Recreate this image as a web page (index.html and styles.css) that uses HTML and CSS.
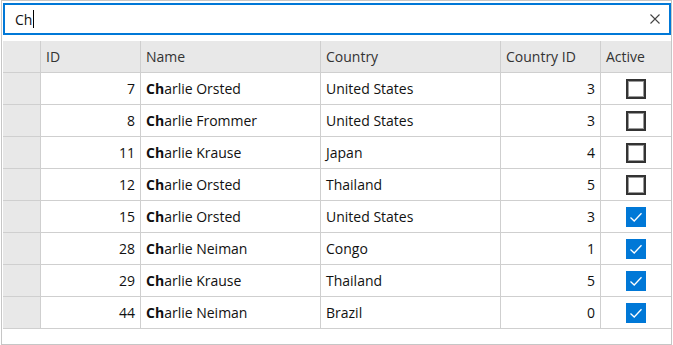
FILE: index.html
```html
<!DOCTYPE html>
<html>
<head>
<meta charset="utf-8">
<link rel="stylesheet" href="styles.css">
</head>
<body>
<div class="frame">
  <div class="search">
    <div class="search-text"><span>Ch</span><span class="caret"></span></div>
    <svg class="clear" width="12" height="12" viewBox="0 0 12 12"><path d="M1.5 1.5 L10.5 10.5 M10.5 1.5 L1.5 10.5" stroke="#444" stroke-width="1.1" fill="none"/></svg>
  </div>
  <div class="grid">
    <div class="row head">
      <div class="cell rh"></div>
      <div class="cell">ID</div>
      <div class="cell">Name</div>
      <div class="cell">Country</div>
      <div class="cell">Country ID</div>
      <div class="cell">Active</div>
    </div>
    <div class="row">
      <div class="cell rh"></div>
      <div class="cell num">7</div>
      <div class="cell"><b>Ch</b>arlie Orsted</div>
      <div class="cell">United States</div>
      <div class="cell num">3</div>
      <div class="cell chk"><span class="box"></span></div>
    </div>
    <div class="row">
      <div class="cell rh"></div>
      <div class="cell num">8</div>
      <div class="cell"><b>Ch</b>arlie Frommer</div>
      <div class="cell">United States</div>
      <div class="cell num">3</div>
      <div class="cell chk"><span class="box"></span></div>
    </div>
    <div class="row">
      <div class="cell rh"></div>
      <div class="cell num">11</div>
      <div class="cell"><b>Ch</b>arlie Krause</div>
      <div class="cell">Japan</div>
      <div class="cell num">4</div>
      <div class="cell chk"><span class="box"></span></div>
    </div>
    <div class="row">
      <div class="cell rh"></div>
      <div class="cell num">12</div>
      <div class="cell"><b>Ch</b>arlie Orsted</div>
      <div class="cell">Thailand</div>
      <div class="cell num">5</div>
      <div class="cell chk"><span class="box"></span></div>
    </div>
    <div class="row">
      <div class="cell rh"></div>
      <div class="cell num">15</div>
      <div class="cell"><b>Ch</b>arlie Orsted</div>
      <div class="cell">United States</div>
      <div class="cell num">3</div>
      <div class="cell chk"><span class="box on"><svg width="20" height="20" viewBox="0 0 20 20"><path d="M4.5 10.5 L8.2 14 L15.5 6.2" stroke="#fff" stroke-width="1.3" fill="none"/></svg></span></div>
    </div>
    <div class="row">
      <div class="cell rh"></div>
      <div class="cell num">28</div>
      <div class="cell"><b>Ch</b>arlie Neiman</div>
      <div class="cell">Congo</div>
      <div class="cell num">1</div>
      <div class="cell chk"><span class="box on"><svg width="20" height="20" viewBox="0 0 20 20"><path d="M4.5 10.5 L8.2 14 L15.5 6.2" stroke="#fff" stroke-width="1.3" fill="none"/></svg></span></div>
    </div>
    <div class="row">
      <div class="cell rh"></div>
      <div class="cell num">29</div>
      <div class="cell"><b>Ch</b>arlie Krause</div>
      <div class="cell">Thailand</div>
      <div class="cell num">5</div>
      <div class="cell chk"><span class="box on"><svg width="20" height="20" viewBox="0 0 20 20"><path d="M4.5 10.5 L8.2 14 L15.5 6.2" stroke="#fff" stroke-width="1.3" fill="none"/></svg></span></div>
    </div>
    <div class="row">
      <div class="cell rh"></div>
      <div class="cell num">44</div>
      <div class="cell"><b>Ch</b>arlie Neiman</div>
      <div class="cell">Brazil</div>
      <div class="cell num">0</div>
      <div class="cell chk"><span class="box on"><svg width="20" height="20" viewBox="0 0 20 20"><path d="M4.5 10.5 L8.2 14 L15.5 6.2" stroke="#fff" stroke-width="1.3" fill="none"/></svg></span></div>
    </div>
  </div>
</div>
</body>
</html>
```

FILE: styles.css
```css
* { box-sizing: border-box; }
html, body { margin: 0; padding: 0; background: #fff; }
body {
  font-family: "Open Sans", "Noto Sans", sans-serif;
  font-size: 14px;
  color: #111;
}
.frame {
  margin-left: 1px;
  width: 671px;
  height: 345px;
  border: 1px solid #c6c6c6;
  padding: 2px 0 0 1px;
  display: flex;
  flex-direction: column;
  gap: 6px;
}
.search {
  width: 668px;
  height: 32px;
  border: 2px solid #0078d7;
  display: flex;
  align-items: center;
  padding: 0 8px 0 10px;
}
.search-text {
  flex: 1;
  display: flex;
  align-items: center;
  font-size: 14px;
}
.caret {
  display: inline-block;
  width: 1px;
  height: 18px;
  background: #000;
  margin-left: 1px;
}
.clear { display: block; }
.grid {
  width: 668px;
  display: flex;
  flex-direction: column;
}
.row {
  display: grid;
  grid-template-columns: 38px 100px 180px 180px 100px 70px;
  height: 32px;
}
.cell {
  border-right: 1px solid #cfcfcf;
  border-bottom: 1px solid #cfcfcf;
  padding: 0 5px;
  display: flex;
  align-items: center;
  white-space: nowrap;
  overflow: hidden;
}
.row .cell:last-child { border-right: none; }
.head .cell {
  background: #e8e8e8;
  color: #333;
}
.rh { background: #e8e8e8; }
.num { justify-content: flex-end; }
.chk { justify-content: center; padding: 0; }
b { font-weight: 700; }
.box {
  width: 20px;
  height: 20px;
  border: 2px solid #333;
  box-shadow: 0 0 0 1px #9a9a9a inset;
  display: block;
}
.box.on {
  border: none;
  box-shadow: none;
  background: #0078d7;
}
.box svg { display: block; }
```
